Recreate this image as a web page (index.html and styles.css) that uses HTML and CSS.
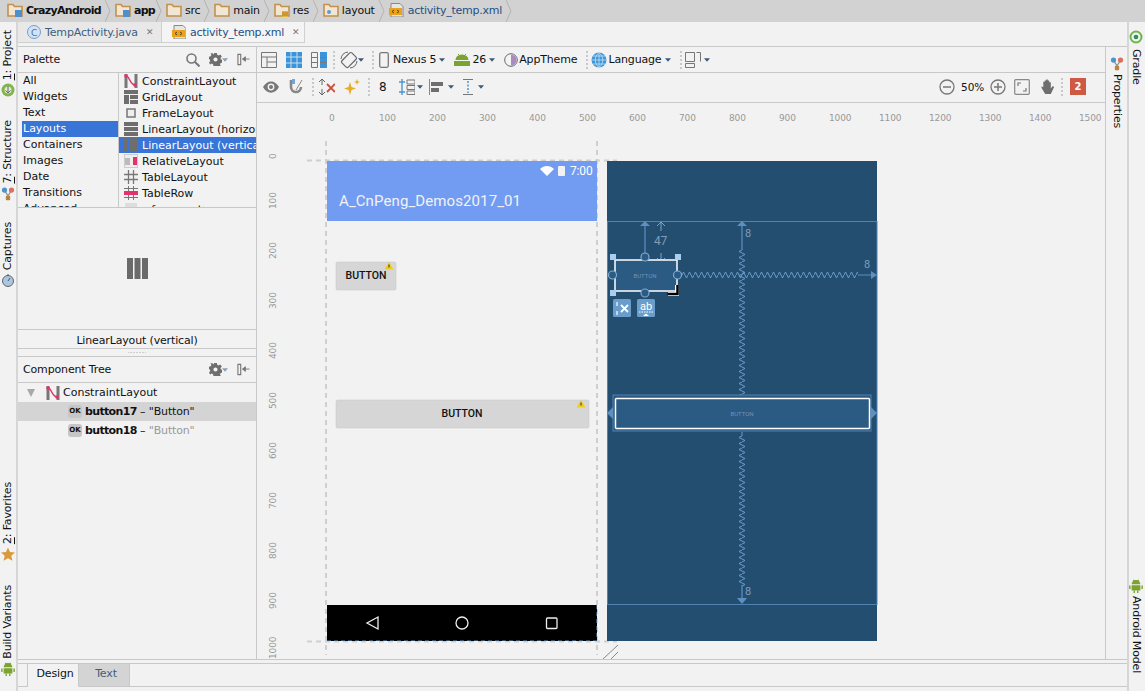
FILE: index.html
```html
<!DOCTYPE html>
<html lang="en">
<head>
    <meta charset="UTF-8">
    <title>activity_temp.xml - CrazyAndroid</title>
    <link rel="stylesheet" href="styles.css">
</head>
<body>

<svg class="defs" width="0" height="0">
    <symbol id="folder" viewBox="0 0 16 14">
        <path d="M1 13V1.500h5l1.500 2H15V13z" fill="#f2e6d2" stroke="#c1914f" stroke-width="1.600"/>
    </symbol>
    <symbol id="chev" viewBox="0 0 6 22">
        <path d="M0 0l5 11-5 11" fill="none" stroke="#b2b2b2"/>
    </symbol>
    <symbol id="caret" viewBox="0 0 7 4">
        <path d="M0 0h7L3.500 4z" fill="#3c5a78"/>
    </symbol>
    <symbol id="gear" viewBox="0 0 14 14">
        <path d="M5.500 0h3l.4 2 1.500.7 1.800-1 1.600 2.100-1.400 1.500.3 1.500 1.800.7v2.800l-2 .5-.7 1.500 1 1.600-2.100 1.500-1.500-1.300-1.500.4L7.800 14h-3l-.4-1.900-1.400-.7-1.800 1L0 10.300l1.300-1.500-.3-1.500L0 6.500V4l1.800-.5.800-1.400-1-1.700L3.700.3 5.200 1.600z" fill="#6e6e6e"/>
        <circle cx="7" cy="7" r="2.200" fill="#f2f2f2"/>
    </symbol>
    <symbol id="pin" viewBox="0 0 14 14">
        <path d="M1 1.500h3v11H1z" fill="none" stroke="#777" stroke-width="1.200"/>
        <path d="M6 6.500h7.500M6 6.500l3-2.500v5z" stroke="#777" fill="#777"/>
    </symbol>
    <symbol id="android" viewBox="0 0 16 16">
        <path d="M3 6a5 5 0 0 1 10 0zM3 7h10v6H3z" fill="#7aa32f"/>
        <path d="M1 7.500v4M15 7.500v4M6 13v3M10 13v3M5 1l1.500 2M11 1L9.500 3" stroke="#7aa32f" stroke-width="1.600" fill="none"/>
    </symbol>
    <symbol id="bluenodes" viewBox="0 0 14 16">
        <path d="M3 4l4 6M11 4l-4 6" stroke="#8c8c8c" stroke-width="1.500"/>
        <circle cx="3" cy="3.500" r="3" fill="#4f94cd"/>
        <circle cx="11" cy="3.500" r="3" fill="#d9715f"/>
        <rect x="4.500" y="10" width="5" height="5" rx="1" fill="#b98443"/>
    </symbol>
    <symbol id="constraint" viewBox="0 0 14 14">
        <path d="M.500 0h3v14h-3zM10.500 0h3v14h-3z" fill="#777"/>
        <path d="M2 2c4 0 3 8 9 9" fill="none" stroke="#e2336d" stroke-width="1.300"/>
        <circle cx="2" cy="2" r="1.800" fill="#e2336d"/>
        <circle cx="11" cy="11" r="1.800" fill="#e2336d"/>
    </symbol>
</svg>

<div class="app">

    <!-- navigation bar -->
    <nav class="crumbs">
        <span class="crumb"><svg class="crumb-icon"><use href="#folder"/><rect x="8" y="7" width="7" height="7" fill="#4f8fcb"/></svg><b>CrazyAndroid</b></span>
        <svg class="chev"><use href="#chev"/></svg>
        <span class="crumb crumb-app"><svg class="crumb-icon"><use href="#folder"/><rect x="8" y="7" width="7" height="7" fill="#4f8fcb"/></svg><b>app</b></span>
        <svg class="chev"><use href="#chev"/></svg>
        <span class="crumb"><svg class="crumb-icon"><use href="#folder"/></svg>src</span>
        <svg class="chev"><use href="#chev"/></svg>
        <span class="crumb"><svg class="crumb-icon"><use href="#folder"/></svg>main</span>
        <svg class="chev"><use href="#chev"/></svg>
        <span class="crumb"><svg class="crumb-icon"><use href="#folder"/><rect x="8" y="8" width="6" height="6" fill="#e2b93b"/><path d="M8 10h6M8 12h6" stroke="#b5762c"/></svg>res</span>
        <svg class="chev"><use href="#chev"/></svg>
        <span class="crumb"><svg class="crumb-icon"><use href="#folder"/><circle cx="6" cy="9" r="2" fill="#5b9bd5"/></svg>layout</span>
        <svg class="chev"><use href="#chev"/></svg>
        <span class="crumb crumb-file"><svg class="crumb-icon"><path d="M2 .5h9l3 3V14H2z" fill="#e6e6e6" stroke="#888"/><rect x="0" y="5" width="13" height="7" fill="#eaa21c"/><path d="M5 7L3 8.500 5 10M8 7l2 1.500L8 10" fill="none" stroke="#5a4310"/></svg>activity_temp.xml</span>
        <svg class="chev"><use href="#chev"/></svg>
    </nav>

    <div class="workspace">

        <!-- left tool windows -->
        <aside class="strip strip-left">
            <div class="tool tool-project"><span class="tool-label"><u>1</u>: Project</span><svg class="tool-icon" viewBox="0 0 14 14"><circle cx="7" cy="7" r="6.500" fill="#7fb54a"/><circle cx="7" cy="7" r="3.500" fill="#dfe8d0"/><path d="M7 3v7M4.500 7.500L7 10l2.500-2.500" stroke="#6d6d6d" fill="none"/></svg></div>
            <div class="tool tool-structure"><span class="tool-label"><u>7</u>: Structure</span><svg class="tool-icon"><use href="#bluenodes"/></svg></div>
            <div class="tool tool-captures"><span class="tool-label">Captures</span><svg class="tool-icon" viewBox="0 0 14 14"><circle cx="7" cy="8" r="5.500" fill="#a9c6e2" stroke="#666"/><path d="M7 1v2M7 8l2-3" stroke="#555" fill="none"/></svg></div>
            <div class="tool tool-favorites"><span class="tool-label"><u>2</u>: Favorites</span><svg class="tool-icon" viewBox="0 0 14 14"><path d="M7 .5l2 4.500 5 .5-3.700 3.300 1.100 5L7 11.200 2.600 13.800l1.100-5L0 5.500l5-.5z" fill="#d99a3e"/></svg></div>
            <div class="tool tool-variants"><span class="tool-label">Build Variants</span><svg class="tool-icon"><use href="#android"/></svg></div>
        </aside>

        <div class="editor">

            <div class="tabs">
                <div class="tab"><svg class="tab-icon" viewBox="0 0 14 14"><circle cx="7" cy="7" r="6.500" fill="#d3e3f4" stroke="#6ea0d2"/><text x="4" y="10.500" class="tab-c">C</text></svg><span class="tab-java">TempActivity.java</span><span class="tab-close">✕</span></div>
                <div class="tab tab-active"><svg class="tab-icon" viewBox="0 0 14 14"><path d="M2 .5h9l3 3V14H2z" fill="#e6e6e6" stroke="#888"/><rect x="0" y="5" width="13" height="7" fill="#eaa21c"/><path d="M5 7L3 8.500 5 10M8 7l2 1.500L8 10" fill="none" stroke="#5a4310"/></svg><span class="tab-xml">activity_temp.xml</span><span class="tab-close">✕</span></div>
            </div>

            <div class="designer">

                <!-- palette + component tree -->
                <section class="side">
                    <div class="panel-head">
                        <span class="panel-title">Palette</span>
                        <svg class="head-search" viewBox="0 0 14 14"><circle cx="5.500" cy="5.500" r="4.500" fill="none" stroke="#777" stroke-width="1.600"/><path d="M9 9l4.500 4.500" stroke="#777" stroke-width="2"/></svg>
                        <svg class="head-gear"><use href="#gear"/></svg>
                        <svg class="caret caret-gray"><use href="#caret"/></svg>
                        <svg class="head-pin"><use href="#pin"/></svg>
                    </div>
                    <div class="palette">
                        <ul class="cats">
                            <li>All</li>
                            <li>Widgets</li>
                            <li>Text</li>
                            <li class="cat-on">Layouts</li>
                            <li>Containers</li>
                            <li>Images</li>
                            <li>Date</li>
                            <li>Transitions</li>
                            <li>Advanced</li>
                        </ul>
                        <ul class="items">
                            <li><svg class="item-icon"><use href="#constraint"/></svg>ConstraintLayout</li>
                            <li><svg class="item-icon" viewBox="0 0 14 14"><path d="M0 0h14v4H0zM0 5h5v9H0zM6 5h8v4H6zM6 10h8v4H6z" fill="#6e6e6e"/></svg>GridLayout</li>
                            <li><svg class="item-icon" viewBox="0 0 14 14"><rect x="3" y="3" width="8" height="8" fill="#eee" stroke="#777" stroke-width="1.500"/></svg>FrameLayout</li>
                            <li><svg class="item-icon" viewBox="0 0 14 14"><path d="M0 0h14v4H0zM0 5h14v4H0zM0 10h14v4H0z" fill="#6e6e6e"/></svg>LinearLayout (horizontal)</li>
                            <li class="item-on"><svg class="item-icon" viewBox="0 0 14 14"><path d="M0 0h4v14H0zM5 0h4v14H5zM10 0h4v14h-4z" fill="#6e6e6e"/></svg>LinearLayout (vertical)</li>
                            <li><svg class="item-icon" viewBox="0 0 14 14"><rect x=".5" y=".5" width="13" height="13" fill="#eee" stroke="#ccc"/><rect x="1" y="4" width="5" height="7" fill="#bbb"/><rect x="9" y="3" width="4" height="8" fill="#e2336d"/></svg>RelativeLayout</li>
                            <li><svg class="item-icon" viewBox="0 0 14 14"><path d="M0 4.500h14M0 9.500h14M4.500 0v14M9.500 0v14" stroke="#777" stroke-width="1.300"/></svg>TableLayout</li>
                            <li><svg class="item-icon" viewBox="0 0 14 14"><path d="M0 2.500h14M4.500 0v5M9.500 0v5M4.500 9v5M9.500 9v5M0 11.500h14" stroke="#777"/><rect x="0" y="5" width="14" height="4" fill="#e2336d"/></svg>TableRow</li>
                            <li><svg class="item-icon" viewBox="0 0 14 14"><rect x="1" y="1" width="12" height="12" fill="#ddd"/></svg>&lt;fragment&gt;</li>
                        </ul>
                    </div>
                    <div class="preview">
                        <svg class="preview-icon" viewBox="0 0 21 21"><path d="M0 0h6v21H0zM7.500 0h6v21h-6zM15 0h6v21h-6z" fill="#6a6a6a"/></svg>
                    </div>
                    <div class="preview-label">LinearLayout (vertical)</div>
                    <div class="grip"></div>
                    <div class="panel-head">
                        <span class="panel-title">Component Tree</span>
                        <svg class="head-gear"><use href="#gear"/></svg>
                        <svg class="caret caret-gray"><use href="#caret"/></svg>
                        <svg class="head-pin"><use href="#pin"/></svg>
                    </div>
                    <div class="tree">
                        <div class="tree-row tree-root"><span class="tree-arrow"></span><svg class="item-icon"><use href="#constraint"/></svg>ConstraintLayout</div>
                        <div class="tree-row tree-on"><span class="ok">OK</span><span><b>button17</b> – "Button"</span></div>
                        <div class="tree-row"><span class="ok">OK</span><span><b>button18</b> – <span class="muted">"Button"</span></span></div>
                    </div>
                </section>

                <section class="surface">
                    <div class="toolbar">
                        <svg class="tb" viewBox="0 0 16 16"><path d="M.5.5h15v15H.5zM.5 5h15M6 5v10.500M6 10h9.500" fill="#f2f2f2" stroke="#777"/></svg>
                        <svg class="tb" viewBox="0 0 16 16"><rect width="16" height="16" fill="#3c93d8"/><path d="M0 5h16M0 11h16M5 0v16M11 0v16" stroke="#c4e0f6"/></svg>
                        <svg class="tb" viewBox="0 0 16 16"><path d="M.5.5h6v15h-6zM.5 5.500h6M.5 10.500h6" fill="none" stroke="#777"/><rect x="9" width="7" height="16" fill="#3c93d8"/><path d="M9 5.500h7M9 10.500h7" stroke="#777"/></svg>
                        <span class="sep sep-a"></span>
                        <svg class="tb tb-rotate" viewBox="0 0 18 18"><rect x="4.500" y="2" width="9" height="14" rx="1.500" transform="rotate(45 9 9)" fill="none" stroke="#666" stroke-width="1.200"/><path d="M1 8a8 8 0 0 1 7-7M17 10a8 8 0 0 1-7 7" fill="none" stroke="#666"/></svg>
                        <svg class="caret"><use href="#caret"/></svg>
                        <span class="sep sep-b"></span>
                        <svg class="tb tb-phone" viewBox="0 0 10 16"><rect x=".7" y=".7" width="8.600" height="14.600" rx="1.500" fill="#f2f2f2" stroke="#777" stroke-width="1.300"/></svg>
                        <span class="tb-text">Nexus 5</span>
                        <svg class="caret"><use href="#caret"/></svg>
                        <svg class="tb tb-android" viewBox="0 0 16 12"><path d="M1.500 6a6.500 5.500 0 0 1 13 0zM0 7h16v5H0z" fill="#7aa32f"/><path d="M4 0l2 2M12 0l-2 2" stroke="#7aa32f"/></svg>
                        <span class="tb-text">26</span>
                        <svg class="caret"><use href="#caret"/></svg>
                        <svg class="tb tb-theme" viewBox="0 0 14 14"><circle cx="7" cy="7" r="6.300" fill="#f4f4f4" stroke="#666"/><path d="M7 1.500a5.500 5.500 0 0 1 0 11z" fill="#a98ac4"/></svg>
                        <span class="tb-text">AppTheme</span>
                        <span class="sep sep-c"></span>
                        <svg class="tb tb-globe" viewBox="0 0 16 16"><circle cx="8" cy="8" r="7.500" fill="#3e96d8"/><path d="M.5 8h15M2 4h12M2 12h12M8 .5v15M8 .5c-5 4-5 11 0 15M8 .5c5 4 5 11 0 15" fill="none" stroke="#c5e1f5" stroke-width=".8"/></svg>
                        <span class="tb-text">Language</span>
                        <svg class="caret"><use href="#caret"/></svg>
                        <span class="sep sep-d"></span>
                        <svg class="tb tb-panes" viewBox="0 0 16 16"><path d="M.5.5h9v9h-9zM11.500.5h4v9M.5 11.500h9v4h-9z" fill="none" stroke="#777"/></svg>
                        <svg class="caret"><use href="#caret"/></svg>
                    </div>
                    <div class="toolbar toolbar-two">
                        <svg class="tb tb-eye" viewBox="0 0 16 12"><path d="M0 6c4-7.500 12-7.500 16 0-4 7.500-12 7.500-16 0z" fill="#777"/><circle cx="8" cy="6" r="3.400" fill="#f2f2f2"/><circle cx="8" cy="6" r="2" fill="#777"/></svg>
                        <svg class="tb tb-magnet" viewBox="0 0 14 16"><path d="M2 1v7a5 5 0 0 0 10 0" fill="none" stroke="#888" stroke-width="2.600"/><path d="M3 0h3v5H3z" fill="#6fa7d8"/><path d="M13 1L7 11" stroke="#888"/></svg>
                        <span class="sep sep-e"></span>
                        <svg class="tb" viewBox="0 0 16 16"><path d="M8 5l8 8M16 5l-8 8" stroke="#c8503c" stroke-width="1.800"/><path d="M3 0v6M0 3l3-3 3 3M3 16v-6M0 13l3 3 3-3" fill="none" stroke="#666"/></svg>
                        <svg class="tb tb-spark" viewBox="0 0 16 16"><path d="M6 3l1.500 5L12 9.500 7.500 11 6 16l-1.500-5L0 9.500 4.500 8zM13 0l.8 2.200L16 3l-2.200.8L13 6l-.8-2.200L10 3l2.200-.8z" fill="#e8ac24"/></svg>
                        <span class="sep sep-f"></span>
                        <span class="tb-text tb-eight">8</span>
                        <svg class="tb tb-list" viewBox="0 0 16 16"><path d="M3 0v16M0 3h6M0 13h6" stroke="#4f94cd" stroke-width="1.400"/><path d="M8 1h8v4H8zM8 6.500h8v4H8zM8 12h8v3.500H8z" fill="none" stroke="#777"/></svg>
                        <svg class="caret caret-list"><use href="#caret"/></svg>
                        <svg class="tb tb-align" viewBox="0 0 14 16"><path d="M.5 0v16" stroke="#4f94cd"/><path d="M2 3h12v4H2zM2 9h8v4H2z" fill="#6e6e6e"/></svg>
                        <svg class="caret"><use href="#caret"/></svg>
                        <svg class="tb tb-vert" viewBox="0 0 10 16"><path d="M0 .5h10M0 15.500h10" stroke="#777"/><path d="M5 2v12" stroke="#4f94cd" stroke-dasharray="2 1.500" stroke-width="1.500"/></svg>
                        <svg class="caret"><use href="#caret"/></svg>
                        <span class="grow"></span>
                        <svg class="tb tb-zoom" viewBox="0 0 16 16"><circle cx="8" cy="8" r="7" fill="none" stroke="#777" stroke-width="1.300"/><path d="M4 8h8" stroke="#777" stroke-width="1.500"/></svg>
                        <span class="tb-text tb-percent">50%</span>
                        <svg class="tb tb-zoom" viewBox="0 0 16 16"><circle cx="8" cy="8" r="7" fill="none" stroke="#777" stroke-width="1.300"/><path d="M4 8h8M8 4v8" stroke="#777" stroke-width="1.500"/></svg>
                        <svg class="tb tb-fit" viewBox="0 0 16 16"><rect x=".7" y=".7" width="14.600" height="14.600" rx="1" fill="none" stroke="#888" stroke-width="1.200"/><path d="M4 7V4h3M12 9v3H9" fill="none" stroke="#777" stroke-width="1.200"/></svg>
                        <svg class="tb tb-hand" viewBox="0 0 16 17"><path d="M3 7V3h1.500v3.500V1.500H6V6.500V.5h1.700V6.500V1.500h1.600V8V3.500H11V10l2-2.500 1.500 1L11 16H5L1.500 10 .8 8 3 8.500z" fill="#6e6e6e"/></svg>
                        <span class="sep sep-last"></span>
                        <span class="badge">2</span>
                    </div>

                    <!-- design surface, drawn in window coordinates -->
                    <svg class="canvas" viewBox="257 103 848 556" width="848" height="556">
                        <defs>
                            <pattern id="zigh" width="6" height="8" patternUnits="userSpaceOnUse" x="682" y="271">
                                <path d="M0 4l1.500-3 3 6L6 4" fill="none" stroke="#6a9bcb"/>
                            </pattern>
                            <pattern id="zigv" width="8" height="6" patternUnits="userSpaceOnUse" x="738" y="250">
                                <path d="M4 0L1 1.500l6 3L4 6" fill="none" stroke="#6a9bcb"/>
                            </pattern>
                        </defs>

                        <g class="ruler-x">
                            <text x="329" y="121">0</text><text x="379" y="121">100</text><text x="429" y="121">200</text><text x="479" y="121">300</text><text x="529" y="121">400</text><text x="579" y="121">500</text><text x="629" y="121">600</text><text x="679" y="121">700</text><text x="729" y="121">800</text><text x="779" y="121">900</text><text x="829" y="121">1000</text><text x="879" y="121">1100</text><text x="929" y="121">1200</text><text x="979" y="121">1300</text><text x="1029" y="121">1400</text><text x="1079" y="121">1500</text>
                        </g>
                        <g class="ruler-y">
                            <text transform="translate(276 159) rotate(-90)">0</text><text transform="translate(276 209) rotate(-90)">100</text><text transform="translate(276 259) rotate(-90)">200</text><text transform="translate(276 309) rotate(-90)">300</text><text transform="translate(276 359) rotate(-90)">400</text><text transform="translate(276 409) rotate(-90)">500</text><text transform="translate(276 459) rotate(-90)">600</text><text transform="translate(276 509) rotate(-90)">700</text><text transform="translate(276 559) rotate(-90)">800</text><text transform="translate(276 609) rotate(-90)">900</text><text transform="translate(276 659) rotate(-90)">1000</text>
                        </g>

                        <!-- device frame guides -->
                        <path class="guide" d="M326 141v514M597 141v514M307 160.500h310M307 641.500h310"/>

                        <!-- design view -->
                        <rect x="327" y="161" width="270" height="60" fill="#729cf2"/>
                        <path d="M540 169c4-4 10-4 14 0l-7 7z" fill="#fff"/>
                        <rect x="558" y="166" width="7" height="10" rx="1" fill="#f2f2f2"/>
                        <text class="device-clock" x="570" y="175">7:00</text>
                        <text class="device-title" x="339" y="206">A_CnPeng_Demos2017_01</text>

                        <rect class="device-btn" x="336" y="262" width="60" height="28" rx="1.500"/>
                        <text class="device-btn-text" x="366" y="279">BUTTON</text>
                        <path class="warn" d="M389 262l4.500 7.500h-9z"/>
                        <path d="M389 264.500v3" stroke="#333"/>

                        <rect class="device-btn" x="336" y="400" width="253" height="28" rx="1.500"/>
                        <text class="device-btn-text" x="462" y="417">BUTTON</text>
                        <path class="warn" d="M581 400l4.500 7.500h-9z"/>
                        <path d="M581 402.500v3" stroke="#333"/>

                        <rect x="327" y="605" width="270" height="36"/>
                        <path d="M378 617v12l-11-6z" fill="none" stroke="#eee" stroke-width="1.300"/>
                        <circle cx="462" cy="623" r="6" fill="none" stroke="#eee" stroke-width="1.300"/>
                        <rect x="546.500" y="618" width="10.500" height="10.500" rx="1" fill="none" stroke="#eee" stroke-width="1.300"/>
                        <path class="nav-edge" d="M327 640.500h270M596.500 605v36"/>

                        <!-- blueprint view -->
                        <rect x="607" y="161" width="270" height="480" fill="#234e70"/>
                        <rect x="607.500" y="221.500" width="269.500" height="383" fill="none" stroke="#4f82b3"/>

                        <rect x="682" y="271" width="176" height="8" fill="url(#zigh)"/>
                        <path class="bp-line" d="M858 275h14M742 250v-24M645 257v-32M742 432v4M742 585v15"/>
                        <path class="bp-fill" d="M877 275l-6-4v8zM645 221l-5 5h10zM742 221l-5 5h10zM742 604l-5-6h10z"/>
                        <rect x="738" y="250" width="8" height="145" fill="url(#zigv)"/>
                        <rect x="738" y="436" width="8" height="150" fill="url(#zigv)"/>
                        <path class="bp-dim" d="M661 222v9M657 226l4-4 4 4M661 262v-9M657 258l4 4 4-4"/>
                        <text class="bp-num bp-big" x="654" y="245">47</text>
                        <text class="bp-num" x="745" y="237">8</text>
                        <text class="bp-num" x="864" y="268">8</text>
                        <text class="bp-num" x="745" y="595">8</text>

                        <rect x="613" y="395" width="258" height="36" fill="#2b5a83" stroke="#4f82b3"/>
                        <rect x="615.500" y="398.500" width="254" height="30" rx="1" fill="#2b5a83" stroke="#fff" stroke-width="1.500"/>
                        <path class="bp-fill" d="M607 413l6-6v12zM877 413l-6-6v12z"/>
                        <text class="bp-btn" x="742" y="416">BUTTON</text>

                        <rect x="615" y="260" width="62" height="31" fill="#2b5a83" stroke="#fff" stroke-width="1.500"/>
                        <text class="bp-btn" x="645" y="278">BUTTON</text>
                        <path class="bp-handle" d="M610 254h6v6h-6zM675 254h6v6h-6zM610 290h6v6h-6z"/>
                        <path d="M677 285v9h-9" fill="none" stroke="#fff" stroke-width="4"/>
                        <path d="M677.500 285v9h-10" fill="none" stroke="#000" stroke-width="2.500"/>
                        <g class="bp-anchor">
                            <circle cx="645" cy="257" r="4"/><circle cx="612.500" cy="275" r="4"/><circle cx="677.500" cy="275" r="4"/><circle cx="645" cy="293" r="4"/>
                        </g>

                        <rect class="bp-tool" x="613" y="299" width="18" height="18" rx="1.500"/>
                        <path d="M621 305l7 7M628 305l-7 7" stroke="#fff" stroke-width="1.800"/>
                        <path d="M617 302v4M617 311v4" stroke="#dcebf7" stroke-width="1.500"/>
                        <rect class="bp-tool" x="637" y="299" width="18" height="18" rx="1.500"/>
                        <text class="bp-ab" x="646" y="310">ab</text>
                        <path d="M639 312h14" stroke="#fff" stroke-dasharray="1.500 1"/>
                        <path d="M643 316l3-2.500 3 2.500z" fill="#fff"/>

                        <path class="hatch" d="M603 659l15-14M611 659l7-7"/>
                    </svg>
                </section>

                <aside class="strip strip-props">
                    <svg class="tool-icon"><use href="#bluenodes"/></svg>
                    <span class="tool-label">Properties</span>
                </aside>
            </div>

            <div class="modes">
                <span class="mode-gap"></span>
                <span class="mode mode-on">Design</span>
                <span class="mode mode-off">Text</span>
            </div>
        </div>

        <aside class="strip strip-right">
            <div class="tool tool-gradle"><svg class="tool-icon" viewBox="0 0 14 14"><circle cx="7" cy="7" r="5.500" fill="none" stroke="#6fb54a" stroke-width="2"/><circle cx="7" cy="7" r="2.300" fill="#2e8f5e"/></svg><span class="tool-label">Gradle</span></div>
            <div class="tool"><svg class="tool-icon"><use href="#android"/></svg><span class="tool-label">Android Model</span></div>
        </aside>
    </div>
</div>

</body>
</html>
```

FILE: styles.css
```css
* {
    box-sizing: border-box;
}

html, body {
    margin: 0;
    padding: 0;
    height: 100%;
    overflow: hidden;
}

body {
    background-color: #f2f2f2;
    color: #111;
    font-family: "DejaVu Sans", sans-serif;
    font-size: 11px;
    letter-spacing: -0.15px;
}

ul {
    list-style: none;
    margin: 0;
    padding: 0;
}

svg {
    flex: none;
    display: block;
}

.defs {
    position: absolute;
}

.app {
    width: 1145px;
    height: 691px;
    display: flex;
    flex-direction: column;
}

/* navigation bar */
.crumbs {
    height: 22px;
    flex: none;
    display: flex;
    align-items: center;
    background-color: #d2d2d2;
    padding-left: 7px;
    letter-spacing: -0.25px;
}

.crumbs b {
    letter-spacing: -0.7px;
}

.crumb {
    display: flex;
    align-items: center;
    gap: 3px;
    padding-right: 4px;
    margin-bottom: 2px;
}

.crumb-app {
    padding-right: 1px;
}

.crumb-icon {
    width: 16px;
    height: 14px;
}

.crumb-file {
    color: #1f4f86;
}

.chev {
    width: 6px;
    height: 22px;
    margin-right: 4px;
}

/* tool window strips */
.workspace {
    flex: 1;
    display: flex;
    min-height: 0;
}

.strip {
    flex: none;
    position: relative;
    display: flex;
    flex-direction: column;
}

.strip-left {
    width: 18px;
    border-right: 2px solid #d6d6d6;
    padding-top: 8px;
}

.strip-right {
    width: 18px;
    border-left: 2px solid #d6d6d6;
    padding-top: 5px;
    padding-bottom: 18px;
    justify-content: space-between;
}

.tool {
    display: flex;
    flex-direction: column;
    align-items: center;
    width: 16px;
}

.strip-right .tool {
    margin-left: -1px;
}

.tool-label {
    writing-mode: vertical-rl;
    white-space: nowrap;
    font-size: 11px;
    line-height: 16px;
}

.strip-left .tool-label {
    transform: rotate(180deg);
}

.tool-icon {
    width: 14px;
    height: 14px;
    margin: 3px 0;
}

.tool-structure {
    margin-top: 20px;
}

.tool-captures {
    margin-top: 18px;
}

.tool-favorites {
    margin-top: 192px;
}

.tool-variants {
    margin-top: 21px;
}

.tool-gradle .tool-label {
    margin-top: 2px;
}

.strip-props {
    width: 22px;
    border-left: 1px solid #c8c8c8;
    align-items: center;
    padding-top: 7px;
}

/* file tabs */
.editor {
    flex: 1;
    min-width: 0;
    display: flex;
    flex-direction: column;
}

.tabs {
    height: 25px;
    flex: none;
    display: flex;
    border-bottom: 1px solid #c8c8c8;
    padding-bottom: 3px;
}

.tab {
    display: flex;
    align-items: center;
    width: 144px;
    padding-left: 9px;
    gap: 4px;
    background-color: #e8e8e8;
    border-right: 1px solid #d0d0d0;
    border-bottom: 1px solid #d0d0d0;
}

.tab-active {
    background-color: #f4f4f4;
    width: 143px;
    padding-left: 10px;
}

.tab-icon {
    width: 14px;
    height: 14px;
}

.tab-c {
    font-size: 9px;
    fill: #3a76b0;
}

.tab-java {
    color: #3d5f7f;
}

.tab-xml {
    color: #1f4f86;
    letter-spacing: -0.27px;
}

.tab-close {
    font-size: 9px;
    font-weight: bold;
    color: #777;
    margin-left: 4px;
}

/* palette and tree */
.designer {
    flex: 1;
    min-height: 0;
    display: flex;
}

.side {
    width: 239px;
    flex: none;
    display: flex;
    flex-direction: column;
    border-right: 1px solid #c8c8c8;
}

.panel-head {
    height: 26px;
    flex: none;
    display: flex;
    align-items: center;
    padding-left: 5px;
    border-bottom: 1px solid #c8c8c8;
}

.panel-title {
    flex: 1;
}

.head-search {
    width: 14px;
    height: 14px;
    margin-right: 9px;
}

.head-gear {
    width: 13px;
    height: 13px;
}

.caret {
    width: 6px;
    height: 4px;
}

.caret-gray {
    opacity: 0.55;
}

.head-pin {
    width: 13px;
    height: 13px;
    margin: 0 6px 0 9px;
}

.palette {
    height: 135px;
    flex: none;
    display: flex;
    overflow: hidden;
    border-bottom: 1px solid #c8c8c8;
    letter-spacing: 0;
}

.cats {
    width: 101px;
    flex: none;
    padding-left: 4px;
    border-right: 1px solid #c8c8c8;
}

.cats li {
    height: 16px;
    line-height: 16px;
    padding-left: 1px;
}

.cats .cat-on {
    background-color: #3875d7;
    color: #fff;
}

.items {
    flex: 1;
    min-width: 0;
}

.items li {
    height: 16px;
    display: flex;
    align-items: center;
    gap: 4px;
    padding-left: 5px;
    white-space: nowrap;
    overflow: hidden;
}

.items .item-on {
    background-color: #3875d7;
    color: #fff;
}

.item-icon {
    width: 14px;
    height: 14px;
}

.preview {
    height: 122px;
    flex: none;
    display: flex;
    align-items: center;
    justify-content: center;
    border-bottom: 1px solid #c8c8c8;
}

.preview-icon {
    width: 21px;
    height: 21px;
}

.preview-label {
    height: 19px;
    line-height: 22px;
    flex: none;
    text-align: center;
    border-bottom: 1px solid #c8c8c8;
}

.grip {
    height: 8px;
    flex: none;
    background: radial-gradient(circle, #aaa 0.5px, transparent 1px) center / 3px 3px repeat-x;
    background-size: 3px 3px;
    background-clip: content-box;
    padding: 0 110px;
    border-bottom: 1px solid #c8c8c8;
}

.tree-row {
    height: 19px;
    display: flex;
    align-items: center;
    padding-left: 50px;
    white-space: nowrap;
}

.tree-row b {
    letter-spacing: -0.65px;
}

.tree-root {
    padding-left: 9px;
    letter-spacing: 0;
}

.tree-on {
    background-color: #d4d4d4;
}

.tree-arrow {
    width: 0;
    height: 0;
    border-left: 4.5px solid transparent;
    border-right: 4.5px solid transparent;
    border-top: 8px solid #a8a8a8;
    margin-right: 11px;
}

.tree-root .item-icon {
    margin-right: 3px;
}

.ok {
    width: 14px;
    height: 13px;
    line-height: 13px;
    margin-right: 3px;
    border-radius: 3px;
    background-color: #c6c6c6;
    font-size: 7px;
    font-weight: bold;
    text-align: center;
    letter-spacing: 0;
}

.muted {
    color: #999;
}

/* toolbars */
.surface {
    flex: 1;
    min-width: 0;
    display: flex;
    flex-direction: column;
}

.toolbar {
    height: 26px;
    flex: none;
    display: flex;
    align-items: center;
    border-bottom: 1px solid #c8c8c8;
    padding-left: 4px;
}

.toolbar-two {
    height: 30px;
    padding-left: 6px;
    padding-right: 19px;
    padding-bottom: 2px;
}

.tb {
    width: 16px;
    height: 16px;
    margin-right: 9px;
}

.toolbar .caret {
    margin: 0 9px 0 3px;
}

.toolbar .caret-list {
    margin: 0 6px 0 2px;
}

.sep {
    width: 0;
    height: 18px;
    border-left: 2px dotted #c8c8c8;
}

.sep-a {
    margin: 0 5px 0 -3px;
}

.sep-b {
    margin: 0 5px 0 -1px;
}

.sep-c {
    margin: 0 3px 0 9px;
}

.sep-d {
    margin-right: 3px;
}

.sep-e {
    margin: 0 5px 0 -2px;
}

.sep-f {
    margin: 0 6px 0 -3px;
}

.sep-last {
    margin-right: 7px;
}

.tb-rotate {
    width: 18px;
    height: 18px;
    margin-right: -3px;
}

.tb-phone {
    width: 10px;
    margin-right: 4px;
}

.tb-android {
    height: 12px;
    margin-right: 2px;
}

.tb-theme {
    width: 14px;
    height: 14px;
    margin-right: 1px;
}

.tb-text {
    white-space: nowrap;
}

.tb-globe {
    margin-right: 1px;
}

.tb-panes {
    margin-right: 0;
}

.tb-eye {
    margin-right: 10px;
}

.tb-magnet {
    width: 14px;
    margin-right: 11px;
}

.tb-spark {
    margin-right: 11px;
}

.tb-eight {
    margin: 0 12px 0 3px;
    font-size: 12px;
}

.tb-list {
    margin-right: 0;
}

.tb-align {
    width: 14px;
    margin-right: 2px;
}

.tb-vert {
    width: 10px;
    margin-right: 2px;
}

.grow {
    flex: 1;
}

.tb-zoom {
    margin-right: 0;
}

.tb-percent {
    margin: 0 6px;
    font-size: 10.5px;
}

.tb-fit {
    margin: 0 10px 0 8px;
}

.tb-hand {
    margin-right: 5px;
}

.badge {
    width: 16px;
    height: 17px;
    line-height: 17px;
    text-align: center;
    background-color: #cf5a44;
    color: #fff;
    font-size: 10px;
    font-weight: bold;
}

/* design surface */
.canvas {
    flex: 1;
    font-family: Roboto, sans-serif;
}

.ruler-x text,
.ruler-y text {
    font-family: "DejaVu Sans", sans-serif;
    font-size: 9px;
    fill: #999;
}

.guide {
    fill: none;
    stroke: #cfcfcf;
    stroke-width: 2;
    stroke-dasharray: 5 4;
}

.nav-edge {
    fill: none;
    stroke: #2e4f6e;
    stroke-dasharray: 4 3;
}

.device-clock {
    font-size: 12px;
    fill: #fff;
}

.device-title {
    font-size: 15px;
    fill: #f2f2f2;
    letter-spacing: 0.1px;
}

.device-btn {
    fill: #d6d6d6;
    stroke: #c4c4c4;
    stroke-width: 0.5;
}

.device-btn-text {
    font-size: 10.500px;
    font-weight: 500;
    text-anchor: middle;
    fill: #111;
    letter-spacing: 0;
}

.warn {
    fill: #f1cd1a;
}

.bp-line {
    fill: none;
    stroke: #5d8fc0;
    stroke-width: 1.200;
}

.bp-fill {
    fill: #5d8fc0;
}

.bp-dim {
    fill: none;
    stroke: #7fa3c6;
}

.bp-num {
    font-size: 11px;
    fill: #7f9db8;
}

.bp-big {
    font-size: 12px;
}

.bp-btn {
    font-size: 6px;
    fill: #6f94b8;
    text-anchor: middle;
    letter-spacing: 0;
}

.bp-handle {
    fill: #a9cdf0;
}

.bp-anchor circle {
    fill: #2b5a83;
    stroke: #7fa8d0;
    stroke-width: 1.200;
}

.bp-tool {
    fill: #6a9dcb;
}

.bp-ab {
    font-size: 11px;
    fill: #fff;
    text-anchor: middle;
    letter-spacing: 0;
}

.hatch {
    fill: none;
    stroke: #888;
}

/* design / text switch */
.modes {
    height: 32px;
    flex: none;
    display: flex;
    border-top: 1px solid #c8c8c8;
    padding-top: 3px;
    padding-bottom: 4px;
}

.mode-gap {
    width: 10px;
    border-top: 1px solid #c8c8c8;
    border-bottom: 1px solid #c8c8c8;
    border-right: 1px solid #c8c8c8;
}

.mode {
    width: 51px;
    padding-left: 4px;
    text-align: center;
    line-height: 20px;
    border-top: 1px solid #c8c8c8;
    border-bottom: 1px solid #c8c8c8;
    border-right: 1px solid #c8c8c8;
}

.mode-on {
    border-bottom-color: #f2f2f2;
}

.mode-off {
    background-color: #d4d4d4;
    color: #3d5f7f;
}

.modes::after {
    content: "";
    flex: 1;
    border-top: 1px solid #c8c8c8;
    border-bottom: 1px solid #c8c8c8;
}
```
